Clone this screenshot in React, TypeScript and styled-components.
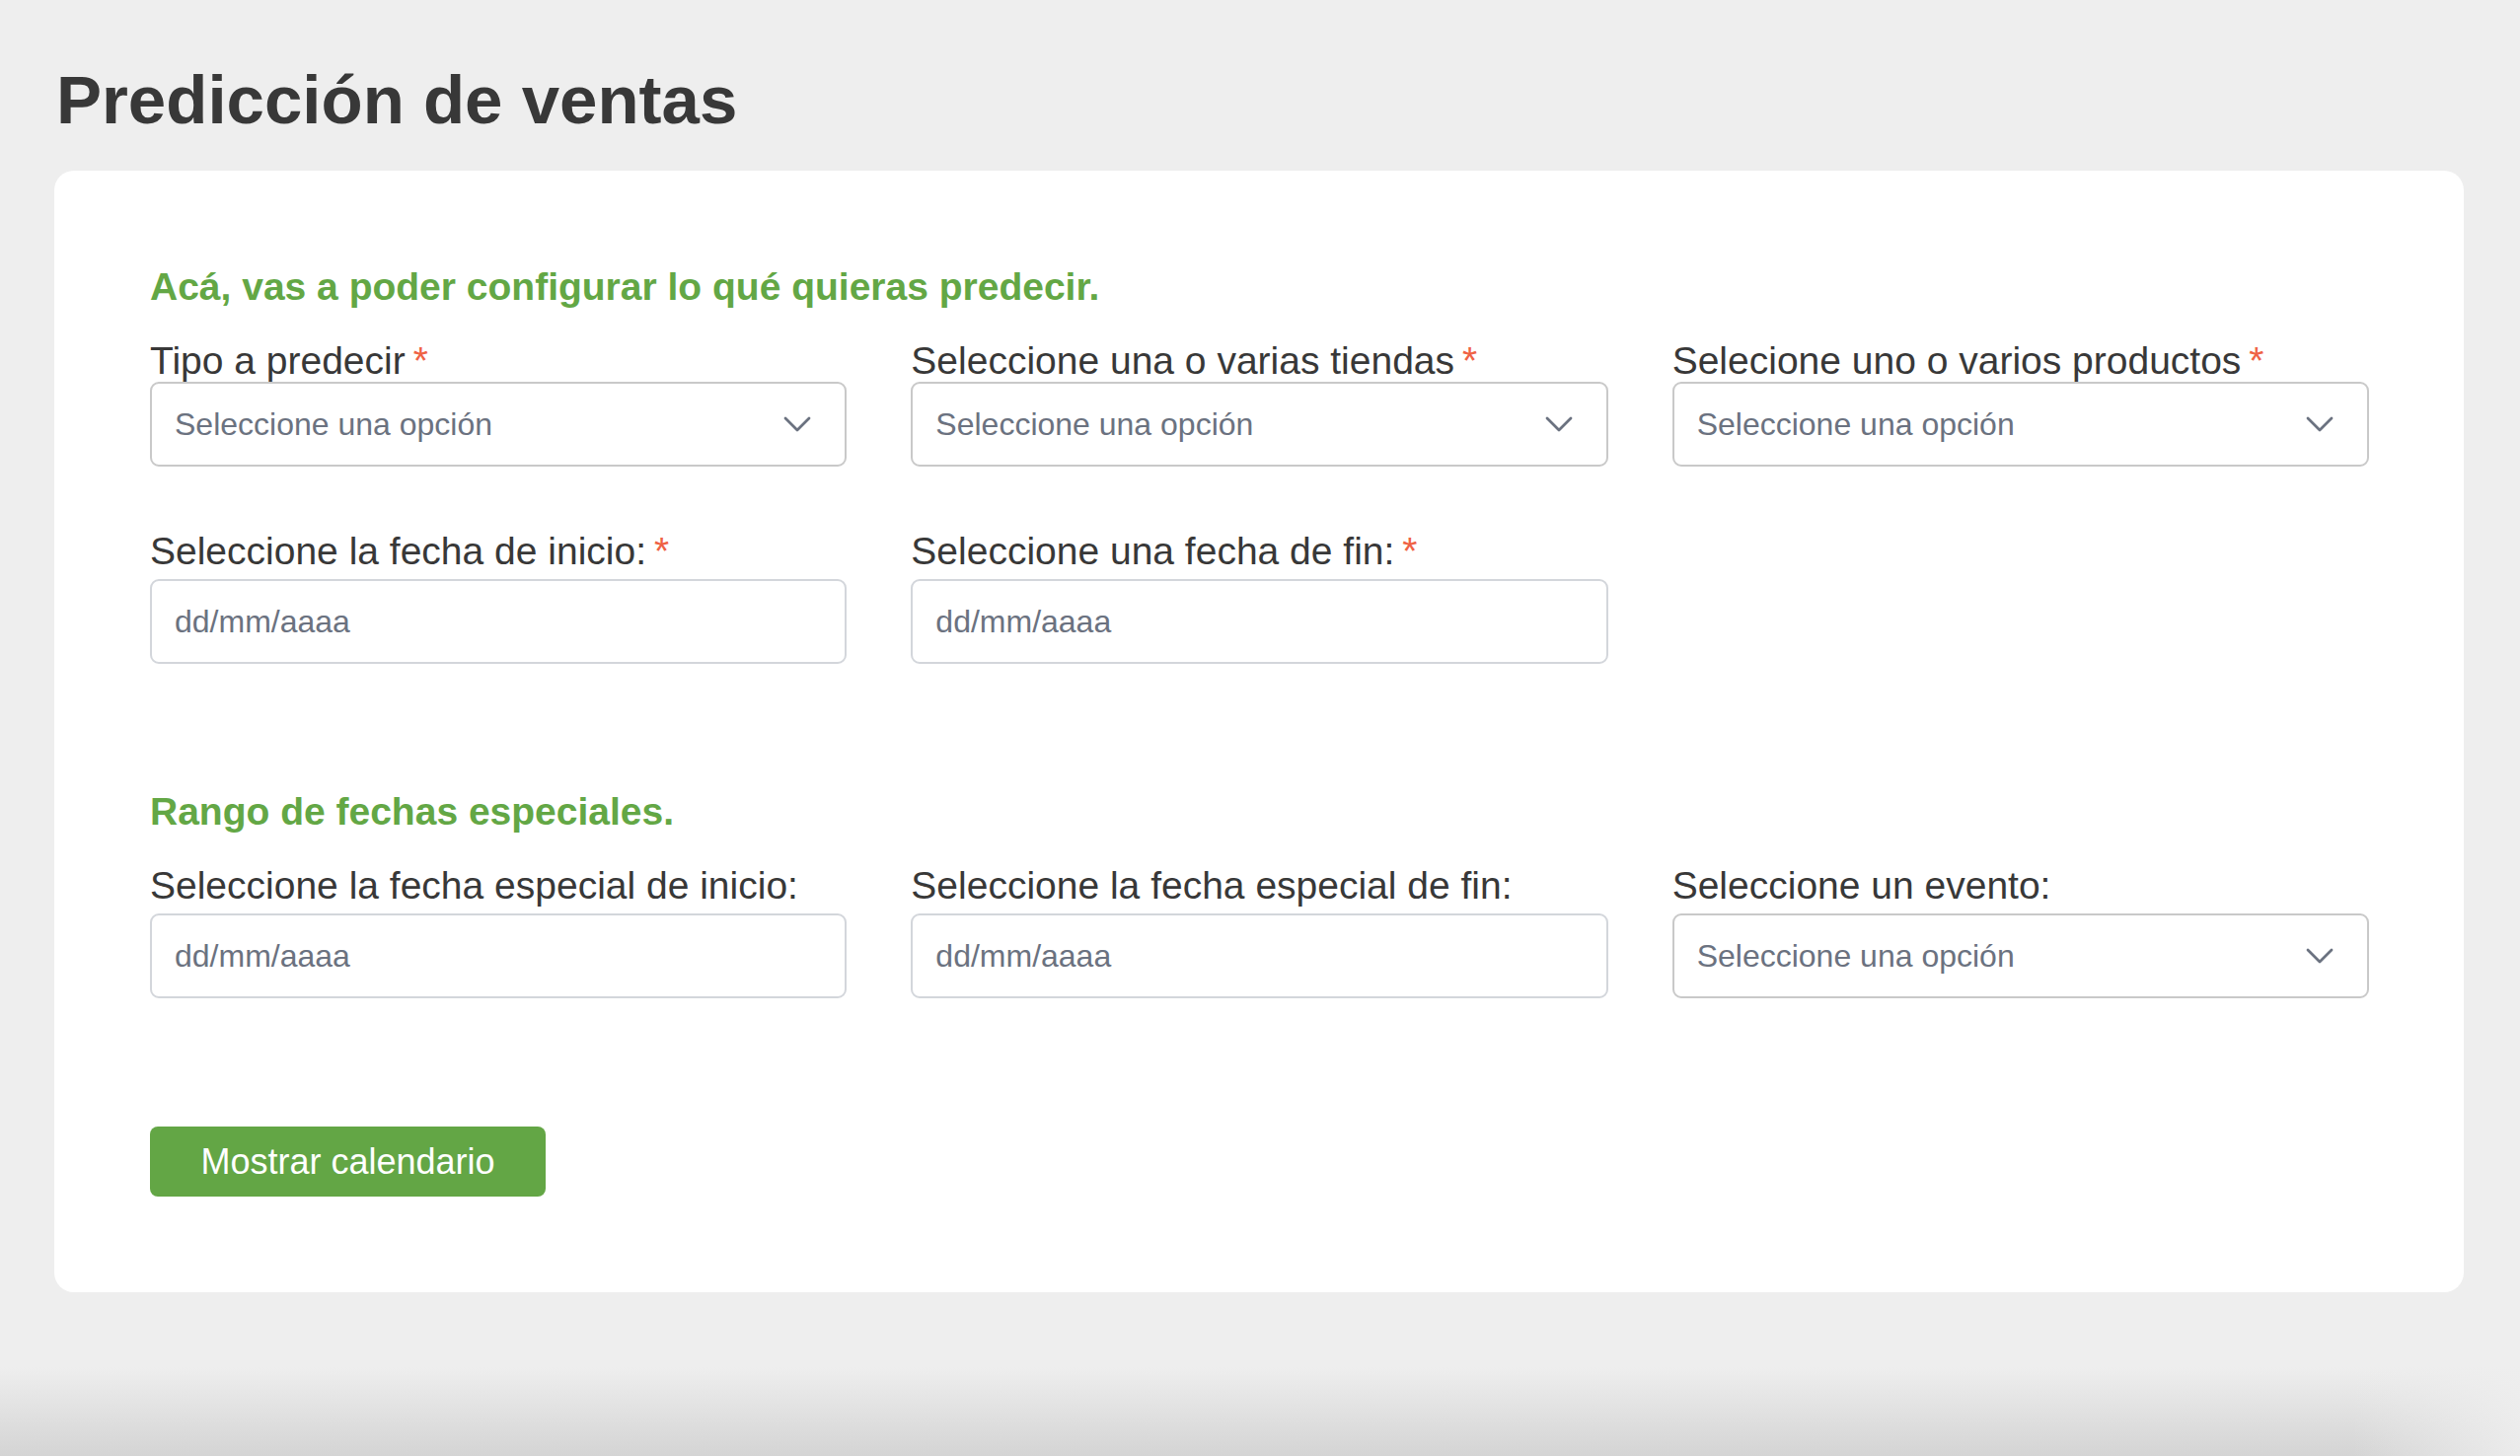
import * as React from "react"
import styled, { createGlobalStyle } from "styled-components"

const GlobalStyle = createGlobalStyle`
html, body {
  margin: 0;
  padding: 0;
}
body {
  min-height: 100vh;
  background:
    linear-gradient(to left, rgba(238,238,238,0.9) 0, rgba(238,238,238,0) 170px) right bottom / 100% 120px no-repeat,
    linear-gradient(to bottom, rgba(238,238,238,0) calc(100% - 90px), rgba(212,212,212,1) 100%),
    #eeeeee;
  font-family: "Liberation Sans", Arial, sans-serif;
  color: #383838;
}
* { box-sizing: border-box; }
`

const Page = styled.main`
  padding: 61px 57px 0 55px;
  min-height: 100vh;
`

const Title = styled.h1`
  margin: 0 0 30px 2px;
  font-size: 69px;
  line-height: 82px;
  font-weight: 700;
  color: #383838;
`

const Card = styled.section`
  background: #ffffff;
  border-radius: 20px;
  padding: 95px 96px 97px 97px;
  display: flex;
  flex-direction: column;
  gap: 127px;
`

const Group = styled.div`
  display: flex;
  flex-direction: column;
`

const Heading = styled.h2`
  margin: 0 0 30px;
  font-size: 39px;
  line-height: 46px;
  font-weight: 700;
  color: #63a745;
`

const Grid = styled.div`
  display: grid;
  grid-template-columns: repeat(3, 1fr);
  column-gap: 65px;
  row-gap: 64px;
`

const Field = styled.div`
  display: flex;
  flex-direction: column;
`

const Label = styled.label<{ $tight?: boolean }>`
  font-size: 39px;
  line-height: 44px;
  color: #383838;
  margin-bottom: ${p => (p.$tight ? "-1px" : "6px")};
`

const Star = styled.span`
  color: #ef6244;
  margin-left: 8px;
`

const Box = styled.div<{ $tone?: "select" | "date" }>`
  height: 86px;
  border: 2px solid ${p => (p.$tone === "select" ? "#c9c9c9" : "#d3d6db")};
  border-radius: 9px;
  background: #ffffff;
  display: flex;
  align-items: center;
  justify-content: space-between;
  padding: 0 34px 0 23px;
  font-size: 32px;
  color: #6b7280;
`

const Chevron = styled.svg`
  width: 28px;
  height: 16px;
  flex-shrink: 0;
`

const Button = styled.button`
  align-self: flex-start;
  margin-top: 3px;
  width: 401px;
  height: 71px;
  border: none;
  border-radius: 8px;
  background: #63a645;
  color: #ffffff;
  font-family: inherit;
  font-size: 36px;
  cursor: pointer;
`

const Arrow = () => (
  <Chevron viewBox="0 0 28 16" fill="none" stroke="#6b7280" strokeWidth="2.8" strokeLinecap="round" strokeLinejoin="round">
    <path d="M2 2l12 12 12-12" />
  </Chevron>
)

type FieldProps = { label: string; required?: boolean; kind: "select" | "date"; tight?: boolean }

const FormField: React.FC<FieldProps> = ({ label, required, kind, tight }) => (
  <Field>
    <Label $tight={tight}>
      {label}
      {required && <Star>*</Star>}
    </Label>
    <Box $tone={kind}>
      <span>{kind === "select" ? "Seleccione una opción" : "dd/mm/aaaa"}</span>
      {kind === "select" && <Arrow />}
    </Box>
  </Field>
)

const App: React.FC = () => (
  <>
    <GlobalStyle />
    <Page>
      <Title>Predicción de ventas</Title>
      <Card>
        <Group>
          <Heading>Acá, vas a poder configurar lo qué quieras predecir.</Heading>
          <Grid>
            <FormField label="Tipo a predecir" required kind="select" tight />
            <FormField label="Seleccione una o varias tiendas" required kind="select" tight />
            <FormField label="Selecione uno o varios productos" required kind="select" tight />
            <FormField label="Seleccione la fecha de inicio:" required kind="date" />
            <FormField label="Seleccione una fecha de fin:" required kind="date" />
          </Grid>
        </Group>
        <Group>
          <Heading>Rango de fechas especiales.</Heading>
          <Grid>
            <FormField label="Seleccione la fecha especial de inicio:" kind="date" />
            <FormField label="Seleccione la fecha especial de fin:" kind="date" />
            <FormField label="Seleccione un evento:" kind="select" />
          </Grid>
        </Group>
        <Button>Mostrar calendario</Button>
      </Card>
    </Page>
  </>
)

export default App
